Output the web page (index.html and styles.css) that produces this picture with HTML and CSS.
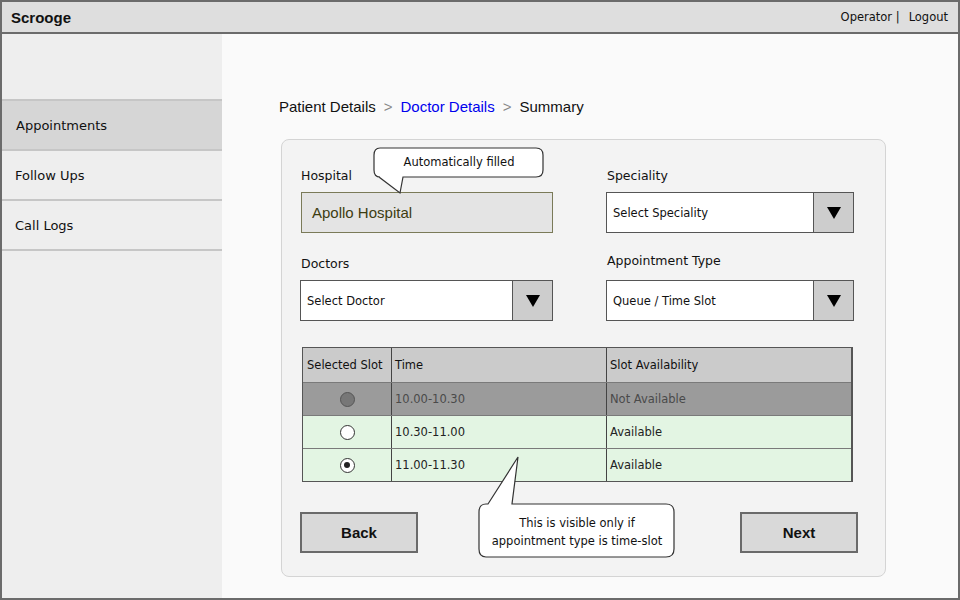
FILE: index.html
```html
<!DOCTYPE html>
<html>
<head>
<meta charset="utf-8">
<link rel="stylesheet" href="styles.css">
</head>
<body>
<div class="frame">
  <header class="topbar">
    <div class="brand">Scrooge</div>
    <div class="user"><span>Operator |</span><span>Logout</span></div>
  </header>
  <div class="body">
    <nav class="sidebar">
      <div class="nav-item active">Appointments</div>
      <div class="nav-item">Follow Ups</div>
      <div class="nav-item">Call Logs</div>
    </nav>
    <main class="main">
      <div class="crumbs">
        <span>Patient Details</span><span class="sep">&gt;</span><span class="current">Doctor Details</span><span class="sep">&gt;</span><span>Summary</span>
      </div>
      <section class="card">
        <div class="fields">
          <div class="field">
            <div class="label">Hospital</div>
            <div class="input filled">Apollo Hospital</div>
          </div>
          <div class="field">
            <div class="label">Speciality</div>
            <div class="select"><span class="val">Select Speciality</span><span class="arrow"></span></div>
          </div>
          <div class="field f2">
            <div class="label">Doctors</div>
            <div class="select"><span class="val">Select Doctor</span><span class="arrow"></span></div>
          </div>
          <div class="field f2">
            <div class="label up">Appointment Type</div>
            <div class="select"><span class="val">Queue / Time Slot</span><span class="arrow"></span></div>
          </div>
        </div>
        <div class="table">
          <div class="tr head">
            <div class="td c1">Selected Slot</div><div class="td c2">Time</div><div class="td c3">Slot Availability</div>
          </div>
          <div class="tr na">
            <div class="td c1 center"><span class="radio disabled"></span></div><div class="td c2">10.00-10.30</div><div class="td c3">Not Available</div>
          </div>
          <div class="tr ok">
            <div class="td c1 center"><span class="radio"></span></div><div class="td c2">10.30-11.00</div><div class="td c3">Available</div>
          </div>
          <div class="tr ok">
            <div class="td c1 center"><span class="radio checked"></span></div><div class="td c2">11.00-11.30</div><div class="td c3">Available</div>
          </div>
        </div>
        <div class="actions">
          <button class="btn">Back</button>
          <button class="btn">Next</button>
        </div>
      </section>
    </main>
  </div>
  <div class="callout callout-top">
    <svg width="172" height="48" viewBox="0 0 172 48"><path d="M7 1 H163 Q170 1 170 8 V23 Q170 30 163 30 H30 L27 46 L6 30 H7 Q1 30 1 23 V8 Q1 1 7 1 Z" fill="#fff" stroke="#333" stroke-width="1.2"/></svg>
    <span class="ctext">Automatically filled</span>
  </div>
  <div class="callout callout-bottom">
    <svg width="198" height="102" viewBox="0 0 198 102"><path d="M8 48 H10 L40 1 L34 48 H188 Q196 48 196 56 V93 Q196 101 188 101 H8 Q1 101 1 93 V56 Q1 48 8 48 Z" fill="#fff" stroke="#333" stroke-width="1.2"/></svg>
    <span class="ctext">This is visible only if<br>appointment type is time-slot</span>
  </div>
</div>
</body>
</html>
```

FILE: styles.css
```css
* { box-sizing: border-box; }
html, body { margin: 0; padding: 0; }
body { width: 960px; height: 600px; font-family: "DejaVu Sans", "Open Sans", sans-serif; color: #222; }

.frame {
  position: relative;
  width: 960px;
  height: 600px;
  border: 2px solid #6b6b6b;
  display: flex;
  flex-direction: column;
  background: #fafafa;
}

.topbar {
  height: 32px;
  flex: none;
  background: #dedede;
  border-bottom: 2px solid #6b6b6b;
  display: flex;
  align-items: center;
  justify-content: space-between;
  padding: 0 10px 0 9px;
}
.brand { font-family: "Liberation Sans", Arial, sans-serif; font-weight: bold; font-size: 15px; color: #111; }
.user { font-size: 11.5px; color: #111; display: flex; gap: 9px; padding-bottom: 1px; }

.body { flex: 1; display: flex; min-height: 0; }

.sidebar {
  width: 220px;
  flex: none;
  background: #eeeeee;
  padding-top: 65px;
}
.nav-item {
  height: 50px;
  display: flex;
  align-items: center;
  padding-left: 13px;
  font-size: 13px;
  color: #111;
  border-bottom: 2px solid #c6c6c6;
}
.nav-item.active { height: 52px; background: #d6d6d6; border-top: 2px solid #c6c6c6; padding-left: 14px; }

.main {
  flex: 1;
  padding: 61px 0 0 57px;
  background: #fafafa;
}
.crumbs {
  font-family: "Liberation Sans", Arial, sans-serif;
  font-size: 15px;
  color: #111;
  display: flex;
  gap: 8px;
  height: 22px;
  align-items: center;
}
.crumbs .sep { color: #888; }
.crumbs .current { color: #0000ee; }

.card {
  margin-top: 22px;
  margin-left: 2px;
  width: 605px;
  height: 438px;
  background: #f3f3f3;
  border: 1px solid #d4d4d4;
  border-radius: 8px;
  padding: 26px 0 0 18px;
}

.fields {
  display: grid;
  grid-template-columns: 253px 248px;
  column-gap: 53px;
  row-gap: 21px;
}
.field { display: flex; flex-direction: column; gap: 8px; }
.label { height: 18px; font-size: 12.5px; color: #111; display: flex; align-items: center; padding-left: 1px; }
.label.up { margin-top: -3px; margin-bottom: 3px; }

.input {
  height: 41px;
  margin-left: 1px;
  border: 1.5px solid #7a7a58;
  background: #e4e4e4;
  display: flex;
  align-items: center;
  padding-left: 10px;
  font-family: "Liberation Sans", Arial, sans-serif;
  font-size: 15px;
  color: #3d3d12;
  width: 252px;
}

.select {
  height: 41px;
  display: flex;
  border: 1.5px solid #555;
  background: #fff;
}
.select .val { flex: 1; display: flex; align-items: center; padding-left: 6px; font-size: 11.5px; color: #111; }
.select .arrow {
  width: 40px;
  background: #cdcdcd;
  border-left: 1.5px solid #555;
  position: relative;
}
.select .arrow::after {
  content: "";
  position: absolute;
  left: 50%;
  top: 50%;
  margin: -6px 0 0 -7px;
  border-left: 7px solid transparent;
  border-right: 7px solid transparent;
  border-top: 12px solid #000;
}

.table {
  margin-top: 26px;
  margin-left: 2px;
  width: 551px;
  border: 1.5px solid #555;
  border-right-width: 2px;
}
.tr { display: flex; height: 33px; border-top: 1px solid #7a7a7a; }
.tr.head { height: 34px; border-top: none; background: #cbcbcb; color: #111; }
.tr.na { background: #9b9b9b; color: #4a4a4a; }
.tr.ok { background: #e3f5e3; color: #222; }
.td { display: flex; align-items: center; font-size: 11.5px; padding-left: 3px; }
.c1 { width: 89px; border-right: 1px solid #444; padding-left: 4px; }
.c2 { width: 215px; border-right: 1px solid #444; }
.c3 { flex: 1; }
.center { justify-content: center; padding-left: 0; }

.radio {
  width: 15px;
  height: 15px;
  border-radius: 50%;
  border: 1.2px solid #333;
  background: #fff;
  position: relative;
}
.radio.disabled { background: #777; border-color: #555; }
.radio.checked::after {
  content: "";
  position: absolute;
  left: 3.5px;
  top: 3.5px;
  width: 6px;
  height: 6px;
  border-radius: 50%;
  background: #222;
}

.actions {
  margin-top: 30px;
  width: 558px;
  display: flex;
  justify-content: space-between;
}
.btn {
  width: 118px;
  height: 41px;
  background: #d9d9d9;
  border: 2px solid #6a6a6a;
  font-family: "Liberation Sans", Arial, sans-serif;
  font-weight: bold;
  font-size: 15px;
  color: #111;
  padding: 0;
}

.callout { position: absolute; }
.callout svg { position: absolute; left: 0; top: 0; }
.ctext { position: absolute; font-size: 11.5px; color: #111; text-align: center; line-height: 16px; }
.callout-top { left: 371px; top: 145px; width: 172px; height: 48px; }
.callout-top .ctext { left: 0; width: 172px; top: 7px; }
.callout-bottom { left: 476px; top: 454px; width: 198px; height: 102px; }
.callout-bottom .ctext { left: 0; width: 198px; top: 58px; line-height: 18px; }
```
